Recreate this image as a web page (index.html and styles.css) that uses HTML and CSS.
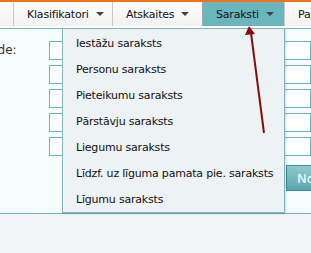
FILE: index.html
```html
<!DOCTYPE html>
<html lang="lv">
<head>
    <meta charset="UTF-8">
    <title>Saraksti</title>
    <link rel="stylesheet" href="styles.css">
</head>
<body>
    <div class="topbar"></div>
    <div class="nav">
        <div class="nav-item">Klasifikatori <span class="caret"></span></div>
        <div class="nav-item">Atskaites <span class="caret"></span></div>
        <div class="nav-item active">Saraksti <span class="caret"></span></div>
        <div class="nav-item">Pašvaldības</div>
    </div>

    <div class="content">
        <div class="form-row"><label class="lbl">Kode:</label><span class="field"></span></div>
        <div class="form-row"><span class="field"></span></div>
        <div class="form-row"><span class="field"></span></div>
        <div class="form-row"><span class="field"></span></div>
        <div class="form-row"><span class="field"></span></div>
        <div class="btn-row"><button class="btn">Nosūtīt</button></div>
    </div>

    <ul class="dropdown">
        <li>Iestāžu saraksts</li>
        <li>Personu saraksts</li>
        <li>Pieteikumu saraksts</li>
        <li>Pārstāvju saraksts</li>
        <li>Liegumu saraksts</li>
        <li>Līdzf. uz līguma pamata pie. saraksts</li>
        <li>Līgumu saraksts</li>
    </ul>

    <svg class="pointer" width="311" height="253" viewBox="0 0 311 253">
        <line x1="264" y1="133" x2="251" y2="33" stroke="#870d0d" stroke-width="2"/>
        <polygon points="249,26 245,35 255,34" fill="#870d0d"/>
    </svg>
</body>
</html>
```
FILE: styles.css
```css
body { margin: 0; width: 311px; height: 253px; overflow: hidden; background: #f3f6f8; font-family: "DejaVu Sans", Verdana, sans-serif; font-size: 11px; color: #111; position: relative; }
.topbar { height: 2px; background: #f0701e; }
.nav { display: flex; height: 24px; padding-left: 13px; background: linear-gradient(#fdfdfd, #f2f2f2); border-bottom: 2px solid #fff; white-space: nowrap; letter-spacing: -0.2px; }
.nav-item { display: flex; align-items: center; padding: 0 13px; border-left: 1px solid #c8c8c8; color: #111; }
.nav-item:nth-child(1) { width: 72px; }
.nav-item:nth-child(2) { width: 63px; }
.nav-item.active { width: 55px; background: #6bb5bd; border-left-color: #9ab; }
.caret { display: inline-block; width: 0; height: 0; margin-left: 7px; border-left: 4px solid transparent; border-right: 4px solid transparent; border-top: 4px solid #444; }
.content { height: 186px; background: #f7fcfc; border-top: 1px solid #74b4b9; border-bottom: 1px solid #74b4b9; padding-top: 12px; box-sizing: border-box; }
.form-row { display: flex; align-items: center; height: 19px; margin-bottom: 5px; padding-left: 49px; position: relative; }
.lbl { position: absolute; left: -17px; top: 2px; color: #333; font-size: 12px; }
.field { display: block; width: 300px; height: 17px; background: #fff; border: 1px solid #69b3bb; }
.btn-row { padding: 4px 0 0 286px; }
.btn { height: 26px; padding: 0 10px; border: 1px solid #3f8c96; background: linear-gradient(#8fcad0, #5ba6ae); color: #fff; font-family: "DejaVu Sans", Verdana, sans-serif; font-size: 13px; text-align: left; white-space: nowrap; }
.dropdown { position: absolute; left: 62px; top: 28px; width: 221px; margin: 0; padding: 1px 0 0; list-style: none; background: #edf2f4; border: 1px solid #84b5b9; box-shadow: 1px 1px 2px rgba(0, 0, 0, 0.15); letter-spacing: -0.2px; }
.dropdown li { height: 26px; line-height: 27px; padding-left: 13px; white-space: nowrap; }
.pointer { position: absolute; left: 0; top: 0; }
```
